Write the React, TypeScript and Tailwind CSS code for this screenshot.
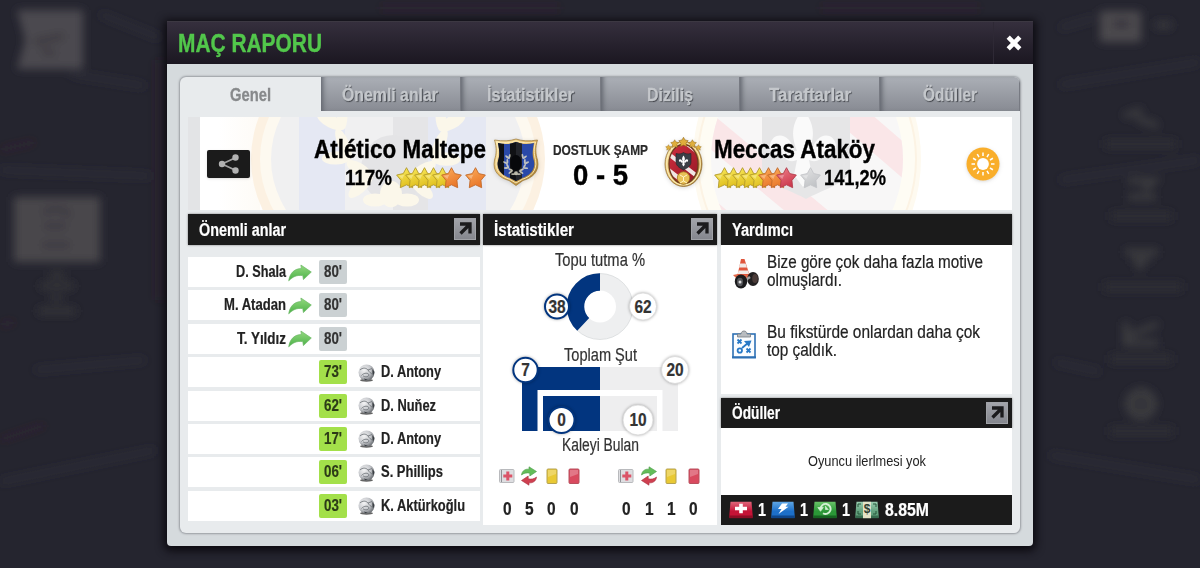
import React, { useLayoutEffect, useRef } from 'react';

const FONT = `font-["Liberation_Sans_Narrow","Liberation_Sans",sans-serif]`;

interface FitProps {
    children: string;
    w: number;
    className?: string;
}

/**
 * Condensed label, squeezes its text to the given width
 */
const Fit: React.FC<FitProps> = ({ children, w, className = "" }) => {
    const inner = useRef<HTMLSpanElement>(null);

    useLayoutEffect(() => {
        const el = inner.current;
        if (!el) return;
        el.style.transform = "none";
        el.style.transform = `scaleX(${w / el.getBoundingClientRect().width})`;
    }, [w, children]);

    return (
        <span className={`block shrink-0 whitespace-nowrap ${className}`} style={{ width: w }}>
            <span ref={inner} className="inline-block origin-left align-top">{children}</span>
        </span>
    );
};

const STAR = "M10 .6 13.1 6 19.4 7.3 15.2 12.2 15.9 18.8 10 16.2 4.1 18.8 4.8 12.2 .6 7.3 6.9 6Z";

const starColors: Record<string, string[]> = {
    y: ["#fbee62", "#dfbd1c", "#b0972a"],
    o: ["#fcae5c", "#e9772a", "#c0692a"],
    r: ["#ef808a", "#cc3a4e", "#b23e4d"],
    g: ["#e4e4e5", "#c2c4c7", "#c4c5c8"],
};

const Star: React.FC<{ kind: string; className?: string }> = ({ kind, className = "" }) => (
    <svg viewBox="0 0 20 20" className={`w-[21px] h-[22px] shrink-0 ${className}`} preserveAspectRatio="none">
        <defs>
            <linearGradient id={`star-${kind}`} x1="0" y1="0" x2=".5" y2="1">
                <stop offset="0" stopColor={starColors[kind][0]} />
                <stop offset="1" stopColor={starColors[kind][1]} />
            </linearGradient>
        </defs>
        <path d={STAR} fill={`url(#star-${kind})`} stroke={starColors[kind][2]} strokeWidth=".8" strokeLinejoin="round" />
        <path d="M10 2.500 8 7 2.500 8 6 11Z" fill="#fff" opacity=".3" />
    </svg>
);

const leaves = [[-9, -9, -20], [-11.5, -3, -35], [-11, 3, -60], [-7, 8, -95], [9, -9, 20], [11.5, -3, 35], [11, 3, 60], [7, 8, 95]];

/** Laurel wreath, used in the crest and in the watermark */
const Laurel: React.FC<{ fill: string }> = ({ fill }) => (
    <g fill={fill}>
        {leaves.map(([x, y, r], i) => (
            <g key={i} transform={`translate(${x} ${y}) rotate(${r})`}>
                <ellipse cx="-1.5" cy="0" rx="1.1" ry="2.9" transform="rotate(-32)" />
                <ellipse cx="1.7" cy="0" rx="1.1" ry="2.9" transform="rotate(32)" />
            </g>
        ))}
        <circle cx="0" cy="10.5" r="2.2" />
        <ellipse cx="-3.2" cy="11.5" rx="2.4" ry="1.1" />
        <ellipse cx="3.2" cy="11.5" rx="2.4" ry="1.1" />
    </g>
);

const FLEUR = "M0-12C4-7 4-3 2 2H3C4-4 10-5 11 0 11 3 8 4 7 2 7 5 4 6 2 5L3 10 0 14-3 10-2 5C-4 6-7 5-7 2-8 4-11 3-11 0-10-5-4-4-3 2H-2C-4-3-4-7 0-12Z";

const HomeCrest = () => (
    <svg viewBox="0 0 46 48" className="w-[46px] h-12 shrink-0 drop-shadow-sm">
        <defs>
            <linearGradient id="gold" x1="0" y1="0" x2="1" y2="1">
                <stop offset="0" stopColor="#fbe9b0" />
                <stop offset=".5" stopColor="#deb05a" />
                <stop offset="1" stopColor="#96702c" />
            </linearGradient>
            <clipPath id="shield">
                <path d="M5 5C12 7 18 6 23 4 28 6 34 7 41 5 39.500 13 39 17 41 23 43 32 36 38 29 40L23 43 17 40C10 38 3 32 5 23 7 17 6.500 13 5 5Z" />
            </clipPath>
        </defs>
        <path d="M1.500 2C10 3.500 17 3 23 1 29 3 36 3.500 44.500 2 42 10 42.500 16 44.500 22 47 34 39 40 30 42.500L23 47.500 16 42.500C7 40-1 34 1.500 22 3.500 16 4 10 1.500 2Z" fill="url(#gold)" stroke="#9a7534" strokeWidth=".7" />
        <path d="M3.500 4C11 5.500 17 5 23 2.800 29 5 35 5.500 42.500 4 40.500 11 41 16 42.600 22.500 44.500 33 37 39 29.500 41.200L23 45 16.500 41.200C9 39 1.500 33 3.400 22.500 5 16 5.500 11 3.500 4Z" fill="none" stroke="#fff0bd" strokeWidth=".9" />
        <g clipPath="url(#shield)">
            <path fill="#2a49a8" d="M0 0H46V48H0Z" />
            <path fill="#101114" d="M0 0H11V48H0ZM17 0H29V48H17Z" />
            <path fill="#34383f" d="M23 0H29V48H23Z" opacity=".5" />
            <ellipse cx="23" cy="25" rx="5.500" ry="8" fill="#07080b" />
            <g transform="translate(23 26) scale(.88)" opacity=".85"><Laurel fill="#d9d6c4" /></g>
        </g>
    </svg>
);

const AwayCrest = () => (
    <svg viewBox="0 0 39 50" className="w-[39px] h-[50px] shrink-0 drop-shadow-sm">
        <defs>
            <clipPath id="oval"><ellipse cx="19.500" cy="27" rx="14.500" ry="19.500" /></clipPath>
            <linearGradient id="stripes" x1="0" y1="0" x2="1" y2="1">
                <stop offset="0" stopColor="#d93243" /><stop offset="1" stopColor="#8e1522" />
            </linearGradient>
        </defs>
        <ellipse cx="19.500" cy="27" rx="18.500" ry="22.500" fill="url(#gold)" stroke="#8a6425" strokeWidth=".7" />
        <ellipse cx="19.500" cy="27" rx="16.800" ry="21" fill="none" stroke="#fbeeb6" strokeWidth="1.200" />
        <g clipPath="url(#oval)">
            <path fill="url(#stripes)" d="M0 0H39V50H0Z" />
            <path stroke="#f1e6e4" strokeWidth="4.200" d="M-2 12 42 46M-6 25 38 59M12-2 50 28" />
        </g>
        <ellipse cx="19.500" cy="27" rx="14.500" ry="19.500" fill="none" stroke="#6d3a21" strokeWidth="1.300" />
        <path d="M12 16.500C16 17.500 18 16.500 19.500 15.500 21 16.500 23 17.500 27 16.500V25C27 29.500 22 31.500 19.500 33 17 31.500 12 29.500 12 25Z" fill="#3a3e45" stroke="#23262b" strokeWidth=".6" />
        <path d={FLEUR} fill="#fff" transform="translate(19.500 23.500) scale(.42)" />
        <circle cx="19.500" cy="41" r="6.200" fill="#e9c257" stroke="#a27420" strokeWidth=".8" />
        <path d="M16 38 19.500 40 23 38M19.500 40V44L16 46M19.500 44 23 46" stroke="#fff3c4" strokeWidth="1" fill="none" />
        <g fill="#dfae3c" stroke="#936a1c" strokeWidth="1.200">
            <path d={STAR} transform="translate(14.500 0) scale(.5)" />
            <path d={STAR} transform="translate(6.500 2.500) scale(.42)" />
            <path d={STAR} transform="translate(24.200 2.500) scale(.42)" />
            <path d={STAR} transform="translate(1.500 7.500) scale(.3)" />
            <path d={STAR} transform="translate(31.500 7.500) scale(.3)" />
        </g>
    </svg>
);

/** Faded crests behind the score line */
const Watermark = () => (
    <svg viewBox="0 0 824 93" className="absolute inset-0 w-full h-full">
        <defs>
            <linearGradient id="fadeL"><stop offset="0" stopColor="#fff" /><stop offset="1" stopColor="#fdf8f0" /></linearGradient>
            <clipPath id="wmL"><ellipse cx="210" cy="42" rx="127" ry="108" /></clipPath>
            <clipPath id="wmR"><ellipse cx="619" cy="42" rx="96" ry="112" /></clipPath>
        </defs>
        <path fill="#e3e4e6" d="M0 0H12V93H0Z" />
        <path fill="url(#fadeL)" d="M30 0H72V93H30Z" opacity=".6" />
        <ellipse cx="210" cy="42" rx="147" ry="130" fill="#fcf1e2" />
        <ellipse cx="210" cy="42" rx="138" ry="118" fill="#fdf9f0" />
        <g clipPath="url(#wmL)">
            <path fill="#f0f0f1" d="M0 0H420V93H0Z" />
            <path fill="#e5e8f3" d="M111 0H157V93H111ZM240 0H298V93H240Z" />
            <path fill="#e5e5e7" d="M205 0H240V93H205Z" />
            <ellipse cx="205" cy="52" rx="32" ry="34" fill="#e4e4e6" />
            <g transform="translate(203 14) scale(5 6)"><Laurel fill="#fbf7ea" /></g>
        </g>
        <ellipse cx="619" cy="42" rx="114" ry="135" fill="#fefaf0" />
        <ellipse cx="619" cy="42" rx="109" ry="125" fill="#fefcf4" stroke="#fcf3e4" strokeWidth="2" />
        <g clipPath="url(#wmR)">
            <path fill="#f8f7f7" d="M500 0H740V93H500Z" />
            <path stroke="#fae6e8" strokeWidth="28" d="M500-5 650 120M590-65 760 82M490 70 560 130" />
            <path fill="#e6e6e7" d="M574 0H662V55C655 68 632 74 618 82 605 74 580 68 574 55Z" />
            <path d={FLEUR} fill="#fafafa" transform="translate(615 28) scale(3)" />
        </g>
    </svg>
);

const ShareIcon = () => (
    <svg viewBox="0 0 22 20" className="w-[22px] h-5">
        <path d="M18 3.500 4 10 18 16.500" stroke="#a3a3a3" strokeWidth="1.700" fill="none" />
        <g fill="#b2b2b2">
            <circle cx="17.500" cy="3.500" r="3.200" /><circle cx="4" cy="10" r="3.200" /><circle cx="17.500" cy="16.500" r="3.200" />
        </g>
    </svg>
);

const SunIcon = () => (
    <svg viewBox="0 0 34 34" className="w-[34px] h-[34px] shrink-0 drop-shadow">
        <circle cx="17" cy="17" r="16.500" fill="#f9ae2b" />
        <circle cx="17" cy="17" r="5.900" fill="#fff" />
        {[...Array(12)].map((_, i) => (
            <path key={i} d="M17 5.500V9" stroke="#fff" strokeWidth="1.500" transform={`rotate(${i * 30} 17 17)`} />
        ))}
    </svg>
);

const SubArrow = () => (
    <svg viewBox="0 0 24 18" className="w-6 h-[18px] shrink-0">
        <defs>
            <linearGradient id="sub" x1="0" y1="0" x2="0" y2="1"><stop offset="0" stopColor="#93d97e" /><stop offset="1" stopColor="#4bb048" /></linearGradient>
        </defs>
        <path d="M.7 16.800C2 8.500 7 4.500 13.300 4.600L12.900 1 23.300 8 15.400 15.600 14.800 11.600C9 10.800 5 12.500.7 16.800Z" fill="url(#sub)" stroke="#6bb866" strokeWidth=".7" />
    </svg>
);

const Ball = () => (
    <svg viewBox="0 0 20 20" className="w-5 h-5 shrink-0">
        <defs>
            <radialGradient id="ball" cx=".35" cy=".35" r=".75"><stop offset="0" stopColor="#f4f4f5" /><stop offset=".55" stopColor="#c6c8cc" /><stop offset="1" stopColor="#5d6166" /></radialGradient>
        </defs>
        <ellipse cx="9.500" cy="17.200" rx="6.500" ry="1.500" fill="#222" opacity=".7" />
        <circle cx="9.500" cy="9.500" r="8" fill="url(#ball)" />
        <path d="M4.500 12.500C7 9.500 11.500 9.500 12 12 11 14.500 7.500 14 6 12.800M3 7C5.500 4.500 9 4.500 11 7L15 5.500M11 7C12 9 14 10.500 16 11.500" stroke="#6a6e74" strokeWidth=".8" fill="none" />
        <path d="M15.300 6 17.300 8.500 17 12 15.500 10.500ZM7 15.500 11 16.800 8 17.300Z" fill="#3c4045" />
    </svg>
);

const OpenButton = () => (
    <button className="w-[22px] h-[22px] shrink-0 border border-[#a0a2a7] bg-linear-to-b from-[#a2a4aa] to-[#85878e] flex items-center justify-center">
        <svg viewBox="0 0 16 16" className="w-4 h-4">
            <path d="M3 3H13V12.500M12.500 3.500 3.500 12.500" stroke="#1b1b1d" strokeWidth="3.300" fill="none" />
        </svg>
    </button>
);

const SectionHeader: React.FC<{ title: string; w: number; open?: boolean }> = ({ title, w, open }) => (
    <div className="h-[30.5px] shrink-0 bg-[#1b1b1b] flex items-center justify-between pl-[10.5px] pr-1 shadow-[0_0_2px_#777]">
        <Fit w={w} className="text-[17.5px] leading-5 pt-px font-bold text-white [-webkit-text-stroke:0.2px]">{title}</Fit>
        {open && <OpenButton />}
    </div>
);

const tabs = [
    { name: "Önemli anlar", w: 96 },
    { name: "İstatistikler", w: 87 },
    { name: "Diziliş", w: 46 },
    { name: "Taraftarlar", w: 82 },
    { name: "Ödüller", w: 54 },
];

const subs = [
    { name: "D. Shala", w: 50 },
    { name: "M. Atadan", w: 62 },
    { name: "T. Yıldız", w: 49 },
];

const goals = [
    { time: "73'", name: "D. Antony", w: 60 },
    { time: "62'", name: "D. Nuňez", w: 55 },
    { time: "17'", name: "D. Antony", w: 60 },
    { time: "06'", name: "S. Phillips", w: 62 },
    { time: "03'", name: "K. Aktürkoğlu", w: 84 },
];

const KeyMoments = () => (
    <section className="w-[291.5px] flex flex-col">
        <SectionHeader title="Önemli anlar" w={87} open />
        <div className="flex flex-col gap-[3.4px] pt-[12.5px]">
            {subs.map((s) => (
                <div key={s.name} className="h-[30px] bg-white flex items-center">
                    <div className="w-[98px] flex justify-end">
                        <Fit w={s.w} className="text-[16px] leading-5 font-bold text-[#222] [-webkit-text-stroke:0.2px]">{s.name}</Fit>
                    </div>
                    <div className="w-[33px] pl-[2px] pt-px"><SubArrow /></div>
                    <div className="w-7 h-6 rounded-xs bg-[#cbd1d3] flex items-center justify-center">
                        <Fit w={18} className="text-[16px] leading-5 font-bold text-[#333] [-webkit-text-stroke:0.2px]">80'</Fit>
                    </div>
                </div>
            ))}
            {goals.map((g) => (
                <div key={g.time} className="h-[30px] bg-white flex items-center pl-[131px]">
                    <div className="w-7 h-6 rounded-xs bg-[#a3e04a] flex items-center justify-center">
                        <Fit w={18} className="text-[16px] leading-5 font-bold text-[#2c3a18] [-webkit-text-stroke:0.2px]">{g.time}</Fit>
                    </div>
                    <div className="w-[34px] pl-[10px] pt-px"><Ball /></div>
                    <Fit w={g.w} className="text-[16px] leading-5 font-bold text-[#222] [-webkit-text-stroke:0.2px]">{g.name}</Fit>
                </div>
            ))}
        </div>
    </section>
);

interface BadgeProps {
    x: number;
    y: number;
    r: number;
    value: string;
    home?: boolean;
}

const Badge: React.FC<BadgeProps> = ({ x, y, r, value, home }) => (
    <g>
        <circle cx={x} cy={y} r={r} fill="#fff" stroke={home ? "#02357f" : "#d9d9d9"} strokeWidth={home ? 2 : .8}
                className="drop-shadow-[0_0_1.5px_#0005]" />
        <text x={x} y={y + 6.2} textAnchor="middle" textLength={value.length * 8.6} lengthAdjust="spacingAndGlyphs"
              className="text-[17.5px] font-bold fill-[#333] stroke-[#333] stroke-[0.2px]">{value}</text>
    </g>
);

const MedKit = () => (
    <svg viewBox="0 0 18 20" className="w-[18px] h-5">
        <rect x="1.500" y="3.500" width="14.500" height="13" rx="1" fill="#dedee1" stroke="#b9babd" />
        <path d="M3.500 4V16" stroke="#8f9196" strokeWidth="1" />
        <path d="M9.800 5.500V14.500M5.300 10H14.300" stroke="#db5468" strokeWidth="3" />
    </svg>
);

const SwapIcon = () => (
    <svg viewBox="0 0 18 20" className="w-[18px] h-5">
        <path d="M1.500 9C2 4.500 5.500 2.800 9 3.200V.8L16.500 5.500 9.800 10V7.200C6.500 6.500 4 7 1.500 9Z" fill="#63bd59" stroke="#4d9b4b" strokeWidth=".6" />
        <path d="M16.500 11C16 15.500 12.500 17.200 9 16.800V19.200L1.500 14.500 8.200 10V12.800C11.500 13.500 14 13 16.500 11Z" fill="#cf4050" stroke="#a83040" strokeWidth=".6" />
    </svg>
);

const Card: React.FC<{ red?: boolean }> = ({ red }) => (
    <svg viewBox="0 0 18 20" className="w-[18px] h-5">
        <rect x="4" y="3" width="10" height="14.500" rx="1" fill={red ? "#d94a5f" : "#e9c934"} stroke={red ? "#b8505e" : "#b5a252"} />
        <path d="M5 4H13V8L5 11Z" fill="#fff" opacity=".25" />
    </svg>
);

const CardStats: React.FC<{ values: string[] }> = ({ values }) => (
    <div className="grid grid-cols-[22.4px_22.4px_22.4px_22.4px] justify-items-center">
        <MedKit />
        <SwapIcon />
        <Card />
        <Card red />
        {values.map((v, i) => (
            <Fit key={i} w={8.6} className="text-[17.5px] leading-5 font-bold text-[#222] mt-[13px] [-webkit-text-stroke:0.2px]">{v}</Fit>
        ))}
    </div>
);

const Statistics = () => (
    <section className="w-[234px] bg-white flex flex-col">
        <SectionHeader title="İstatistikler" w={80} open />
        <div className="flex flex-col items-center">
            <Fit w={90} className="text-[17.5px] leading-5 mt-[5.5px] text-[#333] [-webkit-text-stroke:0.2px]">Topu tutma %</Fit>
            <svg viewBox="0 0 234 70" className="w-[234px] h-[70px] mt-[2px] overflow-visible">
                <circle cx="117" cy="34.500" r="24.500" fill="none" stroke="#eeeff0" strokeWidth="17" />
                <circle cx="117" cy="34.500" r="33" fill="none" stroke="#cfd2d4" strokeWidth=".6" />
                <circle cx="117" cy="34.500" r="24.500" fill="none" stroke="#02357f" strokeWidth="17.500" pathLength="100"
                        strokeDasharray="38 62" transform="rotate(-226.8 117 34.500)" />
                <Badge x={74} y={34.5} r={12} value="38" home />
                <Badge x={160} y={34.5} r={13.5} value="62" />
            </svg>
            <Fit w={73} className="text-[17.5px] leading-5 mt-[3px] text-[#333] [-webkit-text-stroke:0.2px]">Toplam Şut</Fit>
            <svg viewBox="0 0 234 64" className="w-[234px] h-16 mt-[2px] overflow-visible">
                <path fill="#02357f" d="M39 0H117V23H54.500V64H39ZM60 29H117V64H60Z" />
                <path fill="#eeeeef" d="M117 0H195V64H179.500V23H117ZM117 29H174V64H117Z" />
                <Badge x={42.5} y={3} r={12.2} value="7" home />
                <Badge x={192} y={3} r={13.5} value="20" />
                <Badge x={78.5} y={53} r={13} value="0" home />
                <Badge x={155} y={53} r={15} value="10" />
            </svg>
            <Fit w={77} className="text-[17.5px] leading-5 mt-[3.5px] text-[#333] [-webkit-text-stroke:0.2px]">Kaleyi Bulan</Fit>
            <div className="flex gap-[30px] mt-[11.5px]">
                <CardStats values={["0", "5", "0", "0"]} />
                <CardStats values={["0", "1", "1", "0"]} />
            </div>
        </div>
    </section>
);

const ConeIcon = () => (
    <svg viewBox="0 0 28 32" className="w-7 h-8 shrink-0">
        <path d="M1 16 15 13 24 18 8 23Z" fill="#e36a4b" />
        <path d="M9 0H12.500L17.500 16H5.500Z" fill="#e0563c" />
        <path d="M8 4.500H13.600L15 8.500H7ZM6.500 11.500H16L17 15H5.800Z" fill="#f2e9e6" />
        <ellipse cx="21" cy="20" rx="5.800" ry="7" fill="#211f20" />
        <ellipse cx="23" cy="19.500" rx="2.800" ry="4.500" fill="#4a3b38" />
        <path d="M12 22 18 18" stroke="#a0a0a0" strokeWidth="2.500" />
        <ellipse cx="9" cy="22.500" rx="6.200" ry="7" fill="#1b1b1d" />
        <ellipse cx="8" cy="23" rx="3" ry="4.200" fill="#55565a" />
        <circle cx="8" cy="23" r="1.500" fill="#ddd" />
    </svg>
);

const TacticsIcon = () => (
    <svg viewBox="0 0 26 30" className="w-[26px] h-[30px] shrink-0">
        <rect x="2" y="4" width="22" height="23.500" fill="#fbfdff" stroke="#2d70b4" strokeWidth="1.600" />
        <path d="M1 27.300H25" stroke="#2d70b4" strokeWidth="2" />
        <path d="M6.500 7V4H10C10 0 16 0 16 4H19.500V7Z" fill="#b8bcc0" stroke="#777c82" strokeWidth=".8" />
        <g stroke="#2879c6" strokeWidth="1.800" fill="none">
            <path d="M6.500 9.500 10.500 13.500M10.500 9.500 6.500 13.500M15.500 18.500 19.500 22.500M19.500 18.500 15.500 22.500M11 18 17 13" />
            <circle cx="8.800" cy="20.500" r="2.200" />
        </g>
        <path d="M13 11 20.500 10.500 18 17Z" fill="#2879c6" />
    </svg>
);

const Note: React.FC<{ fill: string[]; id: string; children: React.ReactNode }> = ({ fill, id, children }) => (
    <svg viewBox="0 0 24 18" className="w-6 h-[18px] shrink-0">
        <defs>
            <linearGradient id={id} x1="0" y1="0" x2="0" y2="1"><stop offset="0" stopColor={fill[0]} /><stop offset=".6" stopColor={fill[1]} /></linearGradient>
        </defs>
        <path d="M1.500.8H22.500L23.600 13.500V16.800H.4V13.500Z" fill={`url(#${id})`} />
        <path d="M.4 14.500H23.600V17.200H.4Z" fill={fill[2]} />
        {children}
    </svg>
);

const count = "text-[17.5px] leading-5 font-bold text-white [-webkit-text-stroke:0.2px]";

const Rewards = () => (
    <div className="h-[30.5px] shrink-0 bg-[#1b1b1b] flex items-center pl-[8px]">
        <Note id="nr" fill={["#e0667a", "#c51336", "#8d0d25"]}>
            <path d="M12 2.800V12.200M6 7.500H18" stroke="#fff" strokeWidth="3.600" />
        </Note>
        <Fit w={8} className={`${count} ml-[5px] mr-[5px]`}>1</Fit>
        <Note id="nb" fill={["#5fa7e6", "#1d6fc8", "#0f468a"]}>
            <path d="M11 2.500H17L14.500 5.800H17.500L7.500 13 10.500 8H7Z" fill="#fff" />
        </Note>
        <Fit w={8} className={`${count} ml-[5px] mr-[5px]`}>1</Fit>
        <Note id="ng" fill={["#69c368", "#2b9737", "#176422"]}>
            <path d="M7.600 8A5 5 0 1 1 10 12.200" fill="none" stroke="#d3efd3" strokeWidth="1.900" />
            <path d="M4.800 6.500H10.300L7.500 10.300ZM12.500 5V8.500H15.500" fill="#d3efd3" stroke="#d3efd3" strokeWidth=".7" />
        </Note>
        <Fit w={8} className={`${count} ml-[5px] mr-[5px]`}>1</Fit>
        <Note id="nm" fill={["#9bceb1", "#62a07d", "#376c4f"]}>
            <path d="M8 .8H16V17.200H8Z" fill="#e4e3c8" />
            <path d="M3 6V3H6M18 3H21V6M3 10V13H6M21 10V13H18" stroke="#25573b" fill="none" />
            <text x="12" y="12" textAnchor="middle" className="text-[12px] font-bold fill-[#2e3d30]">$</text>
        </Note>
        <Fit w={44} className={`${count} ml-[6px]`}>8.85M</Fit>
    </div>
);

const advice = "text-[17.5px] leading-[18px] text-[#222] [-webkit-text-stroke:0.2px]";

const Assistant = () => (
    <section className="w-[291px] flex flex-col">
        <SectionHeader title="Yardımcı" w={61} />
        <div className="h-[149.5px] shrink-0 bg-white pl-[10px] pt-[8.5px] flex flex-col gap-[34px]">
            <div className="flex h-9">
                <div className="w-9 pl-px pt-[6px]"><ConeIcon /></div>
                <div>
                    <Fit w={216} className={advice}>Bize göre çok daha fazla motive</Fit>
                    <Fit w={75} className={advice}>olmuşlardı.</Fit>
                </div>
            </div>
            <div className="flex h-9">
                <div className="w-9 pt-[6.5px]"><TacticsIcon /></div>
                <div>
                    <Fit w={213} className={advice}>Bu fikstürde onlardan daha çok</Fit>
                    <Fit w={70} className={advice}>top çaldık.</Fit>
                </div>
            </div>
        </div>
        <div className="h-[3.5px] shrink-0" />
        <SectionHeader title="Ödüller" w={48} open />
        <div className="flex-1 bg-white flex items-center justify-center">
            <Fit w={118} className="text-[15.500px] leading-5 text-[#222]">Oyuncu ilerlmesi yok</Fit>
        </div>
        <Rewards />
    </section>
);

const ScoreBanner = () => (
    <div className="relative h-[93px] bg-white overflow-hidden">
        <Watermark />
        <div className="relative h-full flex">
            <button className="w-[43px] h-7 ml-[19px] mt-[33px] shrink-0 rounded-xs bg-[#1b1b1b] flex items-center justify-center shadow">
                <ShareIcon />
            </button>
            <div className="w-[236px] shrink-0 pt-[16.5px] flex flex-col items-end">
                <Fit w={172} className="text-[26px] leading-[30px] font-bold text-black [-webkit-text-stroke:0.4px]">Atlético Maltepe</Fit>
                <div className="flex items-center h-7">
                    <Fit w={47} className="text-[22px] leading-7 font-bold text-black mr-[4px] [-webkit-text-stroke:0.3px]">117%</Fit>
                    {["y", "y", "y", "y", "y", "o"].map((k, i) => <Star key={i} kind={k} className="mr-[-12px]" />)}
                    <Star kind="o" className="ml-[15px]" />
                </div>
            </div>
            <div className="pl-[7px] pt-[21px]"><HomeCrest /></div>
            <div className="w-[120px] shrink-0 pl-[3px] pt-[23px] flex flex-col items-center">
                <Fit w={95} className="text-[14px] leading-5 font-bold text-[#2a2a2a] [-webkit-text-stroke:0.2px]">DOSTLUK ŞAMP</Fit>
                <Fit w={55} className="text-[29px] leading-[30px] font-bold text-black [-webkit-text-stroke:0.4px]">0 - 5</Fit>
            </div>
            <div className="ml-[5px] pt-[20px]"><AwayCrest /></div>
            <div className="w-[263px] shrink-0 pl-[11px] pt-[16.5px]">
                <Fit w={161} className="text-[26px] leading-[30px] font-bold text-black [-webkit-text-stroke:0.4px]">Meccas Ataköy</Fit>
                <div className="flex items-center h-7">
                    {["y", "y", "y", "y", "y", "o", "o", "r"].map((k, i) => <Star key={i} kind={k} className="mr-[-12.2px]" />)}
                    <Star kind="g" className="ml-[15px]" />
                    <Fit w={62} className="text-[22px] leading-7 font-bold text-black ml-[3px] [-webkit-text-stroke:0.3px]">141,2%</Fit>
                </div>
            </div>
            <div className="pt-[30px]"><SunIcon /></div>
        </div>
    </div>
);

/** Dimmed club screen behind the dialog */
const Backdrop = () => (
    <svg viewBox="0 0 1200 568" className="absolute inset-0 w-full h-full">
        <defs>
            <filter id="soft" x="-20%" y="-20%" width="140%" height="140%"><feGaussianBlur stdDeviation="4" /></filter>
        </defs>
        <g filter="url(#soft)">
            <g stroke="#36363f" strokeWidth="4" fill="none" opacity=".7">
                <path d="M100 14 160 38M70 74 145 86M35 370 145 360M0 482 155 450M0 170 150 176" />
                <path d="M1060 85 1200 62M1060 180 1200 160M1050 455 1200 480M1055 362 1100 372M1060 28 1095 18" />
            </g>
            <path d="M155 60H167V300H155Z" fill="#3c2428" opacity=".3" />
            <path d="M0 325 15 322M0 150 35 142M0 440 45 425M380 8H560M820 8H980" stroke="#4a2c2e" strokeWidth="6" opacity=".22" />
            <path d="M17 10H83V69H17L25 40Z" fill="#4b494f" />
            <path d="M34 42 64 36M42 50 55 54" stroke="#3c3b41" strokeWidth="7" />
            <path d="M14 197H100V262H14Z" fill="#48474c" />
            <path d="M43 213C52 207 65 208 70 216M44 226H66M42 245H70" stroke="#37363c" strokeWidth="5" fill="none" />
            <path d="M50 275H64M40 286H74M51 298H62M38 311H76" stroke="#343439" strokeWidth="7" />
            <path d="M1100 11H1141V42H1100Z" fill="#4b484e" />
            <path d="M1113 24H1130" stroke="#37363c" strokeWidth="8" />
            <path d="M1155 25H1172" stroke="#39383d" strokeWidth="7" />
            <g stroke="#3c3c41" strokeWidth="6" fill="none">
                <path d="M1124 116 1142 110M1136 118 1158 126M1128 181H1154L1144 190M1128 197H1156M1125 252H1158M1132 260H1150M1140 258V270M1126 322V343H1158M1128 336 1158 324" />
                <circle cx="1141" cy="404" r="13" fill="#36363b" />
            </g>
            <path d="M1105 144H1176M1111 216H1172M1104 287H1182M1110 359H1172M1110 431H1173" stroke="#2f2f34" strokeWidth="8" />
        </g>
    </svg>
);

const App: React.FC = () => {
    return (
        <div className={`relative w-[1200px] h-[568px] overflow-hidden bg-[#25252f] pt-[21px] ${FONT}`}>
            <Backdrop />
            <div className="relative mx-auto w-[866px] h-[525px] rounded-b-sm bg-[#d5dadd] shadow-[0_2px_9px_3px_#0c0a10]">
                <header className="h-[43px] bg-linear-to-b from-[#352f3d] to-[#1b1721] border-t border-[#3c3842] flex items-center justify-between">
                    <Fit w={144} className="ml-[11px] text-[26.5px] leading-8 font-bold text-[#52c74b] [-webkit-text-stroke:0.4px]">MAÇ RAPORU</Fit>
                    <button className="w-10 h-full border-l border-[#2e2935] flex items-center justify-center">
                        <svg viewBox="0 0 16 16" className="w-4 h-4"><path d="M2.200 2.200 13.800 13.800M13.800 2.200 2.200 13.800" stroke="#fff" strokeWidth="4.600" /></svg>
                    </button>
                </header>
                <div className="ml-[13px] mt-[13px] w-[840px] h-[456px] rounded-md bg-[#e8ebed] shadow-[0_0_2px_1px_#989ca1] overflow-hidden">
                    <nav className="flex h-[34px]">
                        <div className="w-[141px] shrink-0 flex items-center justify-center">
                            <Fit w={41} className="text-[19px] leading-6 pt-px font-bold text-[#87898b] [-webkit-text-stroke:0.3px]">Genel</Fit>
                        </div>
                        {tabs.map((t) => (
                            <div key={t.name} className="flex-1 flex items-center justify-center bg-linear-to-b from-[#abafb6] to-[#888b93] border-r border-[#777a82] shadow-[inset_5px_0_5px_-3px_#60646c]">
                                <Fit w={t.w} className="text-[19px] leading-6 pt-px font-bold text-[#c4c7cb] [text-shadow:1px_1px_1px_#3d4046] [-webkit-text-stroke:0.3px]">{t.name}</Fit>
                            </div>
                        ))}
                    </nav>
                    <main className="px-2 pt-[6px]">
                        <ScoreBanner />
                        <div className="mt-1 h-[311px] flex justify-between">
                            <KeyMoments />
                            <Statistics />
                            <Assistant />
                        </div>
                    </main>
                </div>
            </div>
        </div>
    );
};

export default App;
